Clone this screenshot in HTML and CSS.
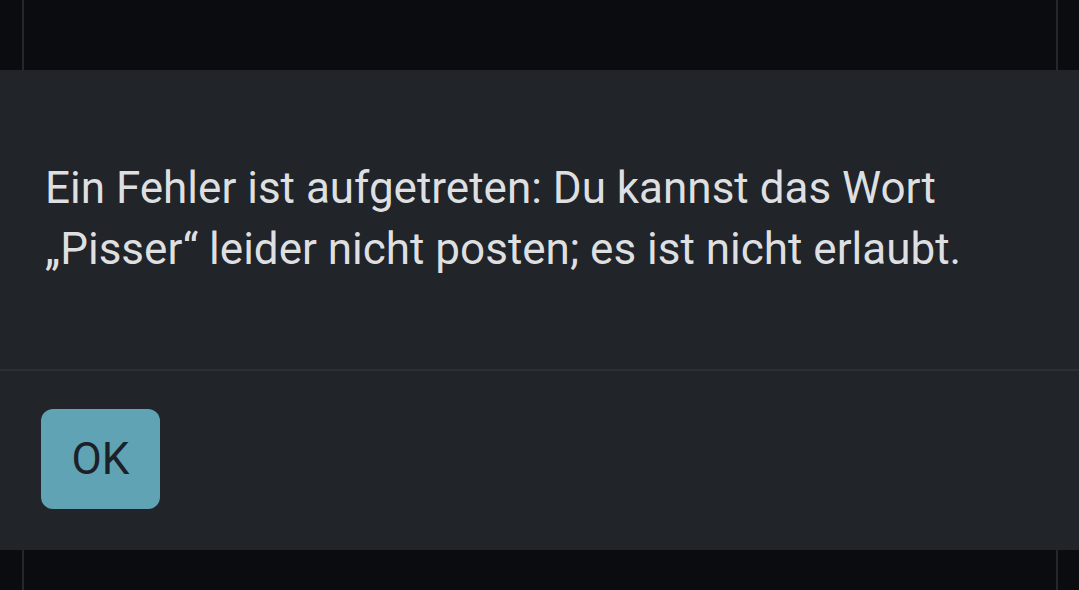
FILE: index.html
```html
<!DOCTYPE html>
<html lang="de">

<head>
    <meta charset="UTF-8">
    <meta name="viewport" content="width=device-width, initial-scale=1.0">
    <title>Fehler</title>
    <link rel="stylesheet" href="styles.css">
</head>

<body>
    <div class="page">
        <div class="rail"></div>
        <div class="rail rail_right"></div>

        <!-- error dialog over the page -->
        <div class="dialog">
            <div class="dialog_body">
                <p class="message">Ein Fehler ist aufgetreten: Du kannst das Wort „Pisser“ leider nicht posten; es ist nicht erlaubt.</p>
            </div>
            <div class="dialog_footer">
                <button class="ok_btn">OK</button>
            </div>
        </div>
    </div>
</body>

</html>
```

FILE: styles.css
```css
* {
    margin: 0;
    padding: 0;
    box-sizing: border-box;
    font-family: Roboto, "Noto Sans", sans-serif;
}

body {
    width: 1079px;
    height: 590px;
    overflow: hidden;
    background-color: #0b0c0f;
}

.page {
    position: relative;
    width: 100%;
    height: 100%;
    padding-top: 70px;
}

.rail {
    position: absolute;
    top: 0;
    bottom: 0;
    left: 22px;
    width: 2px;
    background-color: #25272b;
}

.rail_right {
    left: 1056px;
}

.dialog {
    position: relative;
    width: 100%;
    height: 480px;
    background-color: #212429;
    display: flex;
    flex-direction: column;
}

.dialog_body {
    height: 301px;
    padding: 88px 45px 0 45px;
    border-bottom: 2px solid #2c2f34;
}

.message {
    color: #dedfe0;
    font-size: 44px;
    line-height: 61px;
    max-width: 960px;
}

.dialog_footer {
    padding: 38px 41px 41px 41px;
}

.ok_btn {
    width: 119px;
    height: 100px;
    border: none;
    border-radius: 12px;
    background-color: #5fa3b4;
    color: #1c2127;
    font-size: 44px;
}
```
